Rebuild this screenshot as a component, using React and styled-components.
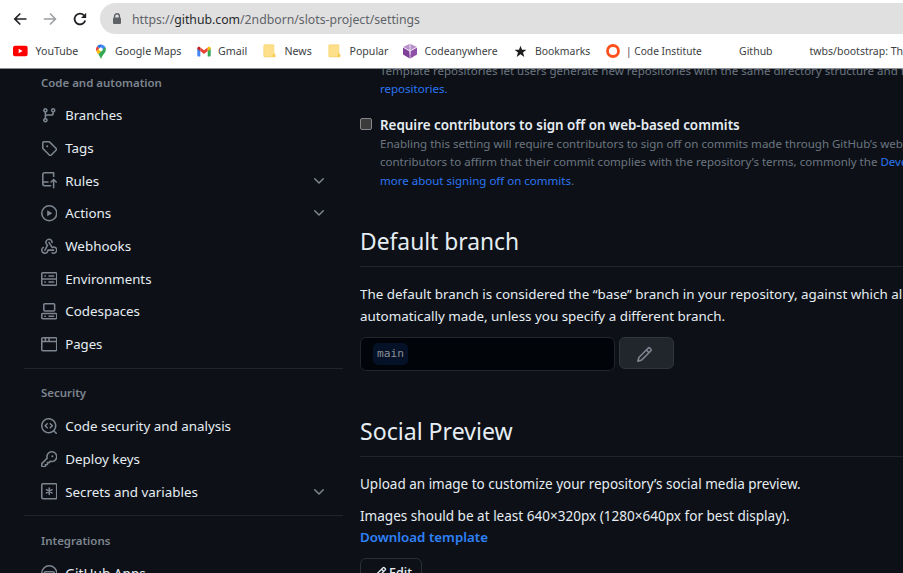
import React from "react";
import styled, { createGlobalStyle } from "styled-components";

const GlobalStyle = createGlobalStyle`
  * { box-sizing: border-box; }
  html, body { margin: 0; padding: 0; overflow: hidden; background: #0d1117; }
  body { font-family: "Noto Sans", "Open Sans", sans-serif; white-space: nowrap; }
  p, h2, h3, ul { margin: 0; padding: 0; }
`;

/* ---------- layout ---------- */

const Window = styled.div`
  display: flex;
  flex-direction: column;
  width: 903px;
  height: 573px;
  overflow: hidden;
`;

const Chrome = styled.header`
  flex: none;
  height: 69px;
  background: #fff;
  border-bottom: 1px solid #8d9094;
  overflow: hidden;
`;

const Toolbar = styled.div`
  display: flex;
  align-items: center;
  height: 31px;
  margin-top: 3px;
  padding-left: 13px;
`;

const NavButton = styled.span`
  display: flex;
  width: ${(p) => p.$width}px;
  flex: none;
  color: ${(p) => (p.$dim ? "#9b9da0" : "#202124")};
`;

const AddressBar = styled.div`
  display: flex;
  align-items: center;
  flex: 1;
  height: 31px;
  padding-left: 12px;
  border-radius: 16px 0 0 16px;
  background: #e0e0e0;
  color: #5f6368;
  font-size: 12.25px;
  svg { margin-right: 10px; flex: none; }
`;

const Url = styled.span`
  padding-top: 1px;
`;

const Host = styled.span`
  color: #27292c;
`;

const Bookmarks = styled.nav`
  display: flex;
  align-items: center;
  height: 34px;
  padding-left: 12px;
  color: #3c4043;
`;

const Bookmark = styled.span`
  display: flex;
  align-items: center;
  flex: none;
  width: ${(p) => p.$width}px;
  font-size: ${(p) => p.$size || 10.5}px;
`;

const BookmarkIcon = styled.span`
  display: flex;
  flex: none;
  width: ${(p) => p.$width}px;
`;

const Page = styled.div`
  display: flex;
  flex: 1;
  min-height: 0;
  overflow: hidden;
  background: #0d1117;
  color: #e6edf3;
`;

/* ---------- sidebar ---------- */

const Sidebar = styled.aside`
  width: 319px;
  flex: none;
  margin-left: 24px;
  margin-top: -11px;
`;

const Group = styled.section`
  padding-bottom: 7.3px;
  border-bottom: 1px solid #20252c;
`;

const GroupTitle = styled.h3`
  height: 41px;
  padding: 14.7px 0 0 17px;
  font-size: 11.45px;
  line-height: 20px;
  font-weight: 600;
  color: #7d8590;
`;

const NavItem = styled.div`
  display: flex;
  align-items: center;
  height: 32.7px;
  padding-left: 16.7px;
  padding-right: 16px;
  color: #7d8590;
`;

const NavLabel = styled.span`
  flex: 1;
  margin-left: 8px;
  color: #e6edf3;
  font-size: ${(p) => p.$size || 13.38}px;
  line-height: 20px;
`;

/* ---------- settings column ---------- */

const Content = styled.main`
  flex: 1;
  min-width: 0;
  margin-left: 17px;
  overflow: hidden;
`;

const Hint = styled.div`
  padding-left: 20px;
  margin-top: ${(p) => p.$shift || 0}px;
  font-size: 11.53px;
  line-height: 18.3px;
  color: #6c7580;
`;

const Link = styled.a`
  color: #2b74f2;
`;

const StrongLink = styled(Link)`
  color: #2f81f7;
  font-weight: 600;
  font-size: 13.33px;
`;

const CheckRow = styled.div`
  display: flex;
  align-items: center;
  height: 21px;
  margin-top: 15.7px;
  font-size: 13.4px;
  font-weight: 600;
`;

const CheckLabel = styled.span`
  padding-top: 1px;
`;

const Checkbox = styled.span`
  width: 12px;
  height: 12px;
  margin-right: 8px;
  border: 1px solid #85878a;
  border-radius: 2px;
  background: #3b3b3b;
`;

const SectionTitle = styled.h2`
  height: ${(p) => p.$height || 43}px;
  margin-top: ${(p) => p.$gap}px;
  border-bottom: 1px solid #20252c;
  font-size: ${(p) => p.$size || 22.8}px;
  line-height: 36px;
  font-weight: 400;
`;

const Paragraph = styled.p`
  margin-top: ${(p) => p.$gap}px;
  font-size: ${(p) => p.$size || 13.4}px;
  line-height: ${(p) => p.$leading || 21.4}px;
`;

const BranchRow = styled.div`
  display: flex;
  align-items: flex-start;
  gap: 4px;
  margin-top: 9px;
`;

const BranchField = styled.div`
  display: flex;
  align-items: center;
  width: 255px;
  height: 34px;
  padding-left: 12px;
  border: 1px solid #21262d;
  border-radius: 6px;
  background: #010409;
`;

const BranchName = styled.code`
  height: 22px;
  padding: 0 4px;
  border-radius: 5px;
  background: #051127;
  color: #8b8f94;
  font: 11.2px/22px "DejaVu Sans Mono", monospace;
`;

const IconButton = styled.button`
  display: flex;
  align-items: center;
  justify-content: center;
  width: 55px;
  height: 32px;
  padding: 3px 4px 0 0;
  border: 1px solid #30353d;
  border-radius: 6px;
  background: #21262d;
  color: #7d8590;
`;

const EditButton = styled.button`
  display: flex;
  align-items: center;
  gap: 2px;
  width: 62px;
  height: 32px;
  margin-top: 9.2px;
  padding: 0 0 2px 12px;
  border: 1px solid #2a2f37;
  border-radius: 6px;
  background: #0d1117;
  color: #e6edf3;
  font: 500 12.6px "Noto Sans", sans-serif;
`;

/* ---------- icons ---------- */

const PATHS = {
  branch: ["M9.5 3.25a2.25 2.25 0 1 1 3 2.122V6A2.5 2.5 0 0 1 10 8.5H6a1 1 0 0 0-1 1v1.128a2.251 2.251 0 1 1-1.5 0V5.372a2.25 2.25 0 1 1 1.5 0v1.836A2.493 2.493 0 0 1 6 7h4a1 1 0 0 0 1-1v-.628A2.25 2.25 0 0 1 9.5 3.25Zm-6 0a.75.75 0 1 0 1.5 0 .75.75 0 0 0-1.5 0Zm8.25-.75a.75.75 0 1 0 0 1.5.75.75 0 0 0 0-1.5ZM4.25 12a.75.75 0 1 0 0 1.5.75.75 0 0 0 0-1.5Z"],
  tag: ["M1 7.775V2.75C1 1.784 1.784 1 2.75 1h5.025c.464 0 .91.184 1.238.513l6.25 6.25a1.75 1.75 0 0 1 0 2.474l-5.026 5.026a1.75 1.75 0 0 1-2.474 0l-6.25-6.25A1.752 1.752 0 0 1 1 7.775Zm1.5 0c0 .066.026.13.073.177l6.25 6.25a.25.25 0 0 0 .354 0l5.025-5.025a.25.25 0 0 0 0-.354l-6.25-6.25a.25.25 0 0 0-.177-.073H2.75a.25.25 0 0 0-.25.25ZM6 5a1 1 0 1 1 0 2 1 1 0 0 1 0-2Z"],
  push: ["M1 2.5A2.5 2.5 0 0 1 3.5 0h8.75a.75.75 0 0 1 .75.75v3.5a.75.75 0 0 1-1.5 0V1.5h-8a1 1 0 0 0-1 1v6.708A2.493 2.493 0 0 1 3.5 9h3.25a.75.75 0 0 1 0 1.5H3.5a1 1 0 0 0 0 2h5.75a.75.75 0 0 1 0 1.5H3.5A2.5 2.5 0 0 1 1 11.5Zm13.23 7.79h-.001l-1.224-1.224v6.184a.75.75 0 0 1-1.5 0V9.066L10.28 10.29a.75.75 0 0 1-1.06-1.061l2.505-2.504a.75.75 0 0 1 1.06 0L15.29 9.23a.751.751 0 0 1-.018 1.042.751.751 0 0 1-1.042.018Z"],
  play: ["M8 0a8 8 0 1 1 0 16A8 8 0 0 1 8 0ZM1.5 8a6.5 6.5 0 1 0 13 0 6.5 6.5 0 0 0-13 0Zm4.879-2.773 4.264 2.559a.25.25 0 0 1 0 .428l-4.264 2.559A.25.25 0 0 1 6 10.559V5.442a.25.25 0 0 1 .379-.215Z"],
  webhook: ["M5.5 4.25a2.25 2.25 0 0 1 4.5 0 .75.75 0 0 0 1.5 0 3.75 3.75 0 1 0-6.14 2.889l-2.272 4.258a.75.75 0 0 0 1.324.706L7 7.25a.75.75 0 0 0-.309-1.015A2.25 2.25 0 0 1 5.5 4.25Z", "M7.364 3.607a.75.75 0 0 1 1.03.257l2.608 4.349a3.75 3.75 0 1 1-.628 6.785.75.75 0 0 1 .752-1.299 2.25 2.25 0 1 0-.033-3.88.75.75 0 0 1-1.03-.256L7.107 4.636a.75.75 0 0 1 .257-1.03Z", "M2.9 8.776A.75.75 0 0 1 2.625 9.8 2.25 2.25 0 1 0 6 11.75a.75.75 0 0 1 .75-.751h5.5a.75.75 0 0 1 0 1.5H7.425a3.75 3.75 0 1 1-5.55-3.998.75.75 0 0 1 1.024.274Z"],
  server: ["M1.75 1h12.5c.966 0 1.75.784 1.75 1.75v4c0 .372-.116.717-.314 1 .198.283.314.628.314 1v4a1.75 1.75 0 0 1-1.75 1.75H1.75A1.75 1.75 0 0 1 0 12.75v-4c0-.358.109-.707.314-1a1.739 1.739 0 0 1-.314-1v-4C0 1.784.784 1 1.75 1ZM1.5 2.75v4c0 .138.112.25.25.25h12.5a.25.25 0 0 0 .25-.25v-4a.25.25 0 0 0-.25-.25H1.75a.25.25 0 0 0-.25.25Zm.25 5.75a.25.25 0 0 0-.25.25v4c0 .138.112.25.25.25h12.5a.25.25 0 0 0 .25-.25v-4a.25.25 0 0 0-.25-.25ZM7 4.75A.75.75 0 0 1 7.75 4h4.5a.75.75 0 0 1 0 1.5h-4.5A.75.75 0 0 1 7 4.75ZM7.75 10h4.5a.75.75 0 0 1 0 1.5h-4.5a.75.75 0 0 1 0-1.5ZM3 4.75A.75.75 0 0 1 3.75 4h.5a.75.75 0 0 1 0 1.5h-.5A.75.75 0 0 1 3 4.75ZM3.75 10h.5a.75.75 0 0 1 0 1.5h-.5a.75.75 0 0 1 0-1.5Z"],
  codespaces: ["M0 11.25c0-.966.784-1.75 1.75-1.75h12.5c.966 0 1.75.784 1.75 1.75v3A1.75 1.75 0 0 1 14.25 16H1.75A1.75 1.75 0 0 1 0 14.25Zm2-9.5C2 .784 2.784 0 3.75 0h8.5C13.216 0 14 .784 14 1.75v5a1.75 1.75 0 0 1-1.75 1.75h-8.5A1.75 1.75 0 0 1 2 6.75Zm1.75-.25a.25.25 0 0 0-.25.25v5c0 .138.112.25.25.25h8.5a.25.25 0 0 0 .25-.25v-5a.25.25 0 0 0-.25-.25Zm-2 9.5a.25.25 0 0 0-.25.25v3c0 .138.112.25.25.25h12.5a.25.25 0 0 0 .25-.25v-3a.25.25 0 0 0-.25-.25Z", "M7 12.75a.75.75 0 0 1 .75-.75h4.5a.75.75 0 0 1 0 1.5h-4.5a.75.75 0 0 1-.75-.75Zm-4 0a.75.75 0 0 1 .75-.75h.5a.75.75 0 0 1 0 1.5h-.5a.75.75 0 0 1-.75-.75Z"],
  browser: ["M0 2.75C0 1.784.784 1 1.75 1h12.5c.966 0 1.75.784 1.75 1.75v10.5A1.75 1.75 0 0 1 14.25 15H1.75A1.75 1.75 0 0 1 0 13.25ZM14.5 6h-13v7.25c0 .138.112.25.25.25h12.5a.25.25 0 0 0 .25-.25Zm-6-3.5v2h6V2.75a.25.25 0 0 0-.25-.25ZM5 2.5v2h2v-2Zm-3.25 0a.25.25 0 0 0-.25.25V4.5h2v-2Z"],
  codescan: ["M8.47 4.97a.75.75 0 0 0 0 1.06L9.94 7.5 8.47 8.97a.75.75 0 1 0 1.06 1.06l2-2a.75.75 0 0 0 0-1.06l-2-2a.75.75 0 0 0-1.06 0ZM6.53 6.03a.75.75 0 0 0-1.06-1.06l-2 2a.75.75 0 0 0 0 1.06l2 2a.75.75 0 1 0 1.06-1.06L5.06 7.5l1.47-1.47Z", "M12.246 13.307a7.501 7.501 0 1 1 1.06-1.06l2.474 2.473a.749.749 0 0 1-.326 1.275.749.749 0 0 1-.734-.215ZM1.5 7.5a6.002 6.002 0 0 0 3.608 5.504 6.002 6.002 0 0 0 6.486-1.117.748.748 0 0 1 .292-.293A6 6 0 1 0 1.5 7.5Z"],
  key: ["M10.5 0a5.499 5.499 0 1 1-1.288 10.848l-.932.932a.749.749 0 0 1-.53.22H7v.75a.749.749 0 0 1-.22.53l-.5.5a.749.749 0 0 1-.53.22H5v.75a.749.749 0 0 1-.22.53l-.5.5a.749.749 0 0 1-.53.22h-2A1.75 1.75 0 0 1 0 14.25v-2c0-.199.079-.389.22-.53l4.932-4.932A5.5 5.5 0 0 1 10.5 0Zm-4 5.5c-.001.431.069.86.205 1.269a.75.75 0 0 1-.181.768L1.5 12.56v1.69c0 .138.112.25.25.25h1.69l.06-.06v-1.19a.75.75 0 0 1 .75-.75h1.19l.06-.06v-1.19a.75.75 0 0 1 .75-.75h1.19l1.023-1.025a.75.75 0 0 1 .768-.18A4 4 0 1 0 6.5 5.5ZM11 6a1 1 0 1 1 0-2 1 1 0 0 1 0 2Z"],
  pencil: ["M11.013 1.427a1.75 1.75 0 0 1 2.474 0l1.086 1.086a1.75 1.75 0 0 1 0 2.474l-8.61 8.61c-.21.21-.47.364-.756.445l-3.251.93a.75.75 0 0 1-.927-.928l.929-3.25c.081-.286.235-.547.445-.758l8.61-8.61Zm.176 4.823L9.75 4.81l-6.286 6.287a.253.253 0 0 0-.064.108l-.558 1.953 1.953-.558a.253.253 0 0 0 .108-.064Zm1.238-3.763a.25.25 0 0 0-.354 0L10.811 3.75l1.439 1.44 1.263-1.263a.25.25 0 0 0 0-.354Z"],
  chevron: ["M12.78 5.22a.749.749 0 0 1 0 1.06l-4.25 4.25a.749.749 0 0 1-1.06 0L3.22 6.28a.749.749 0 1 1 1.06-1.06L8 8.939l3.72-3.719a.749.749 0 0 1 1.06 0Z"],
};

const StrokeIcon = ({ size = 16.5, children }) => (
  <svg width={size} height={size} viewBox="0 0 16 16" fill="none" stroke="currentColor" strokeWidth="1.5" strokeLinecap="round">
    {children}
  </svg>
);

const Icon = ({ name, size = 16.5 }) => {
  if (name === "asterisk")
    return (
      <StrokeIcon size={size}>
        <rect x=".75" y=".75" width="14.5" height="14.5" rx="1.2" />
        <path d="M8 4.9v6.2M5.3 6.45l5.4 3.1M10.7 6.45l-5.4 3.1" strokeWidth="1.5" />
      </StrokeIcon>
    );
  if (name === "hubot")
    return (
      <StrokeIcon size={size}>
        <path d="M.75 14V8a7.25 7.25 0 0 1 14.5 0v6M3 14V8.2c0-1 .7-1.7 1.7-1.7h6.6c1 0 1.7.7 1.7 1.7V14" />
        <path d="M5 8.6l1 1 1-1 1 1 1-1 1 1 1-1" strokeWidth="1.2" />
      </StrokeIcon>
    );
  return (
    <svg width={size} height={size} viewBox="0 0 16 16" fill="currentColor">
      {PATHS[name].map((d) => (
        <path key={d} d={d} />
      ))}
    </svg>
  );
};

const BackArrow = () => (
  <svg width="14" height="14" viewBox="0 0 14 14" fill="none" stroke="currentColor" strokeWidth="1.7">
    <path d="M13.5 7H2M7.3 1.5 1.8 7l5.500 5.500" />
  </svg>
);

const ForwardArrow = () => (
  <svg width="14" height="14" viewBox="0 0 14 14" fill="none" stroke="currentColor" strokeWidth="1.5">
    <path d="M.8 7h11.4M7 1.5 12.5 7 7 12.5" />
  </svg>
);

const Reload = () => (
  <svg width="14" height="14" viewBox="0 0 14 14">
    <path d="M12.2 8.4A5.4 5.4 0 1 1 11 3.4" fill="none" stroke="currentColor" strokeWidth="1.8" />
    <path d="M13.2.7v5.2H8z" fill="currentColor" />
  </svg>
);

const Lock = () => (
  <svg width="10" height="12" viewBox="0 0 10 12">
    <path d="M2.6 5V3.2a2.4 2.4 0 0 1 4.8 0V5" fill="none" stroke="#5f6368" strokeWidth="1.4" />
    <rect x="1" y="4.4" width="8" height="6.6" rx="1" fill="#5f6368" />
  </svg>
);

const YouTubeLogo = () => (
  <svg width="16" height="12" viewBox="0 0 16 12">
    <rect x="1" y=".7" width="14.6" height="10.5" rx="2" fill="#f00" />
    <path d="M6.7 3.8v4.4L10.6 6z" fill="#fff" />
  </svg>
);

const MapsLogo = () => (
  <svg width="12" height="15" viewBox="0 0 11 15">
    <path d="M5.4.5A5 5 0 0 0 1.5 2.3l2.4 2 3-3.6A5 5 0 0 0 5.4.5z" fill="#1a73e8" />
    <path d="M1.5 2.3A5 5 0 0 0 1 7.4l2.8-3.1z" fill="#ea4335" />
    <path d="M6.9.7 3.7 4.6a2 2 0 0 0 3.2 2.3l3-3.8A5 5 0 0 0 6.9.7z" fill="#4285f4" />
    <path d="M3.8 4.3 1 7.4c.5 1 1.2 1.8 1.9 2.8L7 6.7a2.1 2.1 0 0 1-3.2-2.4z" fill="#fbbc04" />
    <path d="M9.9 3.1 2.9 10.2c1.2 1.6 1.8 2.8 2.1 4 .2.5.7.5.9 0 .8-3.2 4.3-4.9 4.5-8.7a5 5 0 0 0-.5-2.4z" fill="#34a853" />
    <circle cx="5.4" cy="5.4" r="1.8" fill="#fff" />
  </svg>
);

const GmailLogo = () => (
  <svg width="14" height="11" viewBox="0 0 14 11">
    <path d="M.3 2.3 3.3 4.5V10.500H1.2a.9.9 0 0 1-.9-.9z" fill="#4285f4" />
    <path d="M13.7 2.3 10.7 4.5V10.500h2.100a.9.9 0 0 0 .9-.9z" fill="#34a853" />
    <path d="M3.3 1.4 7 4.2l3.7-2.8v3.7L7 7.9 3.3 5.1z" fill="#ea4335" />
    <path d="M.3 2.3c0-1.500 1.500-2 2.600-1.200l.4.3v3.7L.3 2.9z" fill="#c5221f" />
    <path d="M13.7 2.3c0-1.500-1.500-2-2.600-1.200l-.4.3v3.7l3-2.200z" fill="#fbbc04" />
  </svg>
);

const Folder = () => (
  <svg width="13" height="14" viewBox="0 0 13 14">
    <path d="M1.5.8h9.3v8.7l1.300.7v2.700H1.500a.7.7 0 0 1-.7-.7V1.500a.7.7 0 0 1 .7-.7z" fill="#ffe08a" stroke="#f1cc62" strokeWidth=".6" />
    <path d="M9.5 12.9V10.400l1.200-1 1.200 1v2.500z" fill="#f7cf58" />
  </svg>
);

const Cube = () => (
  <svg width="16" height="16" viewBox="0 0 16 16">
    <path d="M8 .7 15 4 8 7.9 1 4z" fill="#b990c9" />
    <path d="M1 4.2 7.7 7.9v7.700L1 11.600z" fill="#7f3f98" />
    <path d="M15 4.2 8.3 7.9v7.700L15 11.600z" fill="#8e4fa8" />
    <path d="M8 .7v6.800M1 4.200l6.800 3.900L15 4.200M8 7.900v3.400" fill="none" stroke="#f3e9f6" strokeWidth=".9" />
  </svg>
);

const Star = () => (
  <svg width="13" height="13" viewBox="0 0 13 13">
    <path d="m6.500.7 1.500 4h4.400L9 7.400l1.300 4.700-3.800-2.800-3.800 2.800L4 7.400.6 4.700H5z" fill="#1b1c1e" />
  </svg>
);

const Ring = () => (
  <svg width="14" height="14" viewBox="0 0 14 14">
    <circle cx="7" cy="7" r="5.5" fill="none" stroke="#ff4f1a" strokeWidth="2.8" />
  </svg>
);

/* ---------- data ---------- */

const BOOKMARKS = [
  { label: "YouTube", icon: <YouTubeLogo />, iconWidth: 23.5, width: 82.5, size: 10.6 },
  { label: "Google Maps", icon: <MapsLogo />, iconWidth: 20.5, width: 102.5, size: 10.73 },
  { label: "Gmail", icon: <GmailLogo />, iconWidth: 21, width: 66, size: 10.7 },
  { label: "News", icon: <Folder />, iconWidth: 21.5, width: 65, size: 10.6 },
  { label: "Popular", icon: <Folder />, iconWidth: 21.5, width: 74, size: 10.6 },
  { label: "Codeanywhere", icon: <Cube />, iconWidth: 22.5, width: 112, size: 10.4 },
  { label: "Bookmarks", icon: <Star />, iconWidth: 21, width: 92, size: 10.4 },
  { label: "| Code Institute", icon: <Ring />, iconWidth: 20, width: 133, size: 10.2 },
  { label: "Github", width: 70.5, size: 10.5 },
  { label: "twbs/bootstrap: The most popular HTML", width: 210, size: 10.5 },
];

const GROUPS = [
  {
    title: "Code and automation",
    items: [
      { label: "Branches", icon: "branch", size: 13.1 },
      { label: "Tags", icon: "tag" },
      { label: "Rules", icon: "push", expandable: true },
      { label: "Actions", icon: "play", expandable: true },
      { label: "Webhooks", icon: "webhook" },
      { label: "Environments", icon: "server", size: 13.25 },
      { label: "Codespaces", icon: "codespaces" },
      { label: "Pages", icon: "browser", size: 13.2 },
    ],
  },
  {
    title: "Security",
    items: [
      { label: "Code security and analysis", icon: "codescan" },
      { label: "Deploy keys", icon: "key" },
      { label: "Secrets and variables", icon: "asterisk", expandable: true },
    ],
  },
  { title: "Integrations", items: [{ label: "GitHub Apps", icon: "hubot", size: 13.6 }] },
];

export default function App() {
  return (
    <Window>
      <GlobalStyle />
      <Chrome>
        <Toolbar>
          <NavButton $width={30}><BackArrow /></NavButton>
          <NavButton $width={30} $dim><ForwardArrow /></NavButton>
          <NavButton $width={27}><Reload /></NavButton>
          <AddressBar>
            <Lock />
            <Url>https://<Host>github.com</Host>/2ndborn/slots-project/settings</Url>
          </AddressBar>
        </Toolbar>
        <Bookmarks>
          {BOOKMARKS.map((b) => (
            <Bookmark key={b.label} $width={b.width} $size={b.size}>
              {b.icon && <BookmarkIcon $width={b.iconWidth}>{b.icon}</BookmarkIcon>}
              {b.label}
            </Bookmark>
          ))}
        </Bookmarks>
      </Chrome>
      <Page>
        <Sidebar>
          {GROUPS.map((g) => (
            <Group key={g.title}>
              <GroupTitle>{g.title}</GroupTitle>
              {g.items.map((item) => (
                <NavItem key={item.label}>
                  <Icon name={item.icon} />
                  <NavLabel $size={item.size}>{item.label}</NavLabel>
                  {item.expandable && <Icon name="chevron" size={16} />}
                </NavItem>
              ))}
            </Group>
          ))}
        </Sidebar>
        <Content>
          <Hint $shift={-7.3}>
            Template repositories let users generate new repositories with the same directory structure and files. Learn more about template
            <br />
            <Link>repositories.</Link>
          </Hint>
          <CheckRow>
            <Checkbox />
            <CheckLabel>Require contributors to sign off on web-based commits</CheckLabel>
          </CheckRow>
          <Hint>
            Enabling this setting will require contributors to sign off on commits made through GitHub’s web interface.
            <br />
            contributors to affirm that their commit complies with the repository’s terms, commonly the <Link>Developer Certificate</Link>
            <br />
            <Link>more about signing off on commits</Link>.
          </Hint>
          <SectionTitle $gap={34}>Default branch</SectionTitle>
          <Paragraph $gap={17.1} $leading={21.9}>
            The default branch is considered the “base” branch in your repository, against which all pull requests
            <br />
            automatically made, unless you specify a different branch.
          </Paragraph>
          <BranchRow>
            <BranchField><BranchName>main</BranchName></BranchField>
            <IconButton><Icon name="pencil" size={17} /></IconButton>
          </BranchRow>
          <SectionTitle $gap={42} $height={44} $size={23.1}>Social Preview</SectionTitle>
          <Paragraph $gap={17} $size={13.5}>
            Upload an image to customize your repository’s social media preview.
          </Paragraph>
          <Paragraph $gap={10.8} $size={13.55}>
            Images should be at least 640×320px (1280×640px for best display).
            <br />
            <StrongLink>Download template</StrongLink>
          </Paragraph>
          <EditButton><Icon name="pencil" size={14} />Edit</EditButton>
        </Content>
      </Page>
    </Window>
  );
}
